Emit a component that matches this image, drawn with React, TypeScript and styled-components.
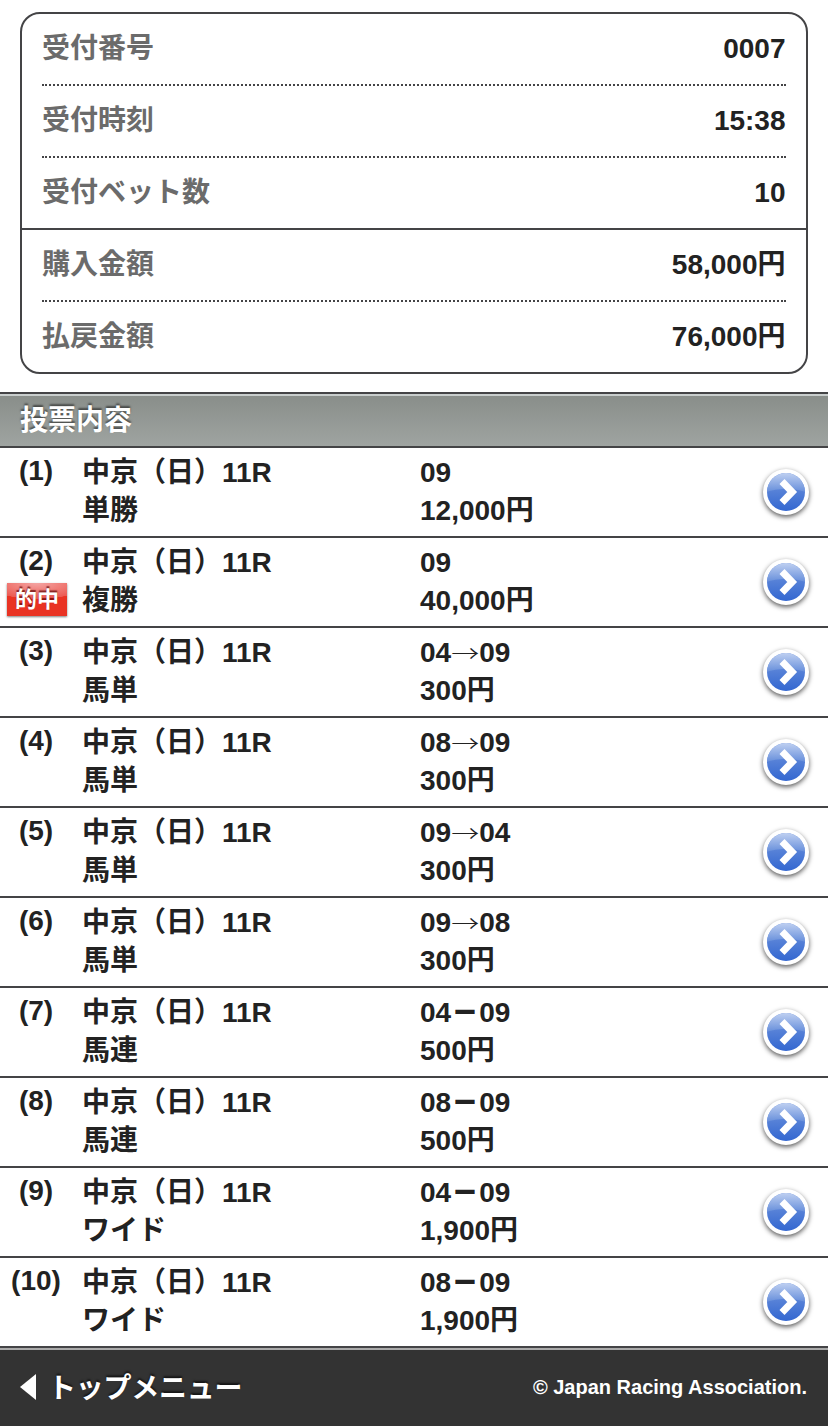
import React from "react";
import styled, { createGlobalStyle } from "styled-components";

const GlobalStyle = createGlobalStyle`
  * { box-sizing: border-box; }
  body {
    margin: 0;
    background: #fff;
    color: #222;
    font: bold 28px/38px "Liberation Sans", "Noto Sans CJK JP", sans-serif;
  }
`;

const Page = styled.div`
  display: flex;
  flex-direction: column;
  width: 828px;
  height: 1426px;
  overflow: hidden;
`;

const Summary = styled.dl`
  margin: 12px 20px 18px;
  border: 2px solid #444446;
  border-radius: 20px;
`;

const SummaryGroup = styled.div`
  padding: 0 20px;
  & + & { border-top: 2px solid #444446; }
`;

const SummaryRow = styled.div`
  display: flex;
  justify-content: space-between;
  height: 70px;
  padding-top: 16px;
  & + & {
    height: 72px;
    border-top: 2px dotted #444446;
  }
`;

const Label = styled.dt`
  color: #6b6b6b;
`;

const Value = styled.dd`
  margin: 0 0.5px 0 0;
`;

const SectionTitle = styled.h2`
  height: 56px;
  margin: 0;
  padding: 8px 20px 0;
  border-top: 2px solid #444446;
  border-bottom: 2px solid #444446;
  background: linear-gradient(#c9cecd 2px, #898e8a 2px, #9fa4a1);
  color: #fff;
  font-size: 28px;
  line-height: 38px;
  text-shadow: 0 -2px 2px rgba(0, 0, 0, 0.5);
`;

const BetList = styled.ul`
  margin: 0;
  padding: 0;
  list-style: none;
`;

const BetRow = styled.li`
  display: grid;
  grid-template-columns: 82px 338px 1fr 46px;
  height: 90px;
  padding: 6px 19px 0 0;
  border-bottom: 2px solid #444446;
`;

const NumberCell = styled.div`
  display: flex;
  flex-direction: column;
  align-items: center;
  width: 72px;
  margin-top: -2px;
`;

const HitBadge = styled.span`
  width: 60px;
  height: 33px;
  margin: 3px 0 0 2px;
  background: radial-gradient(ellipse 50px 16px at 50% 0, #f4a5a3 0, #ec5a52 98%, transparent 100%), #e93323;
  box-shadow: 0 1px 2px rgba(0, 0, 0, 0.5);
  color: #fff;
  font-size: 22px;
  line-height: 33px;
  text-align: center;
  text-shadow: 0 -2px 1px rgba(90, 0, 0, 0.7);
`;

const Cell = styled.div`
  white-space: nowrap;
`;

const Separator = styled.span<{ $arrow: boolean }>`
  display: inline-block;
  width: 28px;
  text-align: center;
  line-height: 28px;
  font-family: "Noto Sans CJK JP", sans-serif;
  font-weight: ${(p) => (p.$arrow ? 300 : 900)};
  transform: ${(p) => (p.$arrow ? "translateY(2px) scaleY(0.8)" : "translateY(0.5px) scale(0.98, 1.3)")};
`;

const DetailButton = styled.button`
  width: 46px;
  height: 46px;
  margin-top: 15px;
  padding: 0;
  border: 4px solid #fff;
  border-radius: 50%;
  background: #fff;
  box-shadow: 0 2px 5px rgba(0, 0, 0, 0.65);
  svg { display: block; }
`;

const Footer = styled.footer`
  display: flex;
  justify-content: space-between;
  flex: 1;
  padding: 18px 21px 0 20px;
  border-top: 2px solid #aaa;
  background: #333;
  color: #fff;
`;

const TopLink = styled.a`
  display: flex;
  gap: 12px;
  letter-spacing: -0.25px;
  line-height: 41px;
  text-shadow: 0 -2px 2px rgba(0, 0, 0, 0.6);
  svg { margin-top: 6px; }
`;

const Copyright = styled.small`
  font-size: 20px;
`;

const summary = [
  [["受付番号", "0007"], ["受付時刻", "15:38"], ["受付ベット数", "10"]],
  [["購入金額", "58,000円"], ["払戻金額", "76,000円"]],
];

const bets = [
  { type: "単勝", pick: ["09"], amount: "12,000円" },
  { type: "複勝", pick: ["09"], amount: "40,000円", hit: true },
  { type: "馬単", pick: ["04", "→", "09"], amount: "300円" },
  { type: "馬単", pick: ["08", "→", "09"], amount: "300円" },
  { type: "馬単", pick: ["09", "→", "04"], amount: "300円" },
  { type: "馬単", pick: ["09", "→", "08"], amount: "300円" },
  { type: "馬連", pick: ["04", "－", "09"], amount: "500円" },
  { type: "馬連", pick: ["08", "－", "09"], amount: "500円" },
  { type: "ワイド", pick: ["04", "－", "09"], amount: "1,900円" },
  { type: "ワイド", pick: ["08", "－", "09"], amount: "1,900円" },
];

const Chevron = () => (
  <svg width="38" height="38" viewBox="0 0 38 38">
    <defs>
      <linearGradient id="base" x1="0" y1="0" x2="0" y2="1">
        <stop offset="0.3" stopColor="#6189d9" />
        <stop offset="1" stopColor="#3367d1" />
      </linearGradient>
      <linearGradient id="gloss" x1="0" y1="0" x2="0" y2="1">
        <stop offset="0" stopColor="#bfd0f1" />
        <stop offset="1" stopColor="#668edb" />
      </linearGradient>
    </defs>
    <circle cx="19" cy="19" r="19" fill="url(#base)" />
    <path d="M0 19A19 19 0 0 1 38 19C29 15 9 15 0 19Z" fill="url(#gloss)" />
    <path d="M15 8.5L25.2 19L15 29.5" fill="none" stroke="#fff" strokeWidth="7" />
  </svg>
);

export default function App() {
  return (
    <Page>
      <GlobalStyle />
      <Summary>
        {summary.map((group, i) => (
          <SummaryGroup key={i}>
            {group.map(([label, value]) => (
              <SummaryRow key={label}>
                <Label>{label}</Label>
                <Value>{value}</Value>
              </SummaryRow>
            ))}
          </SummaryGroup>
        ))}
      </Summary>
      <SectionTitle>投票内容</SectionTitle>
      <BetList>
        {bets.map((bet, i) => (
          <BetRow key={i}>
            <NumberCell>
              <span>({i + 1})</span>
              {bet.hit && <HitBadge>的中</HitBadge>}
            </NumberCell>
            <Cell>中京（日）11R<br />{bet.type}</Cell>
            <Cell>
              {bet.pick[0]}
              {bet.pick[1] && <Separator $arrow={bet.pick[1] === "→"}>{bet.pick[1]}</Separator>}
              {bet.pick[2]}
              <br />
              {bet.amount}
            </Cell>
            <DetailButton aria-label="詳細"><Chevron /></DetailButton>
          </BetRow>
        ))}
      </BetList>
      <Footer>
        <TopLink>
          <svg width="16" height="26" viewBox="0 0 16 26"><path d="M0 13L16 0V26Z" fill="#fff" /></svg>
          トップメニュー
        </TopLink>
        <Copyright>© Japan Racing Association.</Copyright>
      </Footer>
    </Page>
  );
}
